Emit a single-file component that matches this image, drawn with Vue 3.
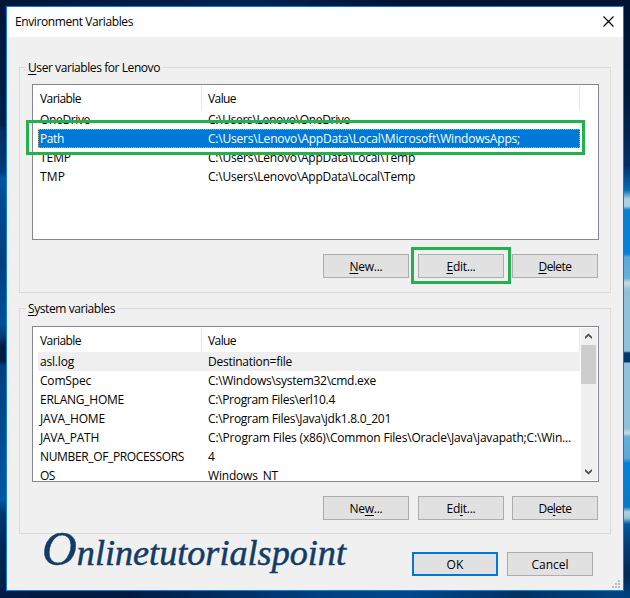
<script setup>
const groups = [
  {
    id: 'user',
    title: ['', 'U', 'ser variables for Lenovo'],
    titleWidth: 132,
    scroll: false,
    rows: [
      { name: 'OneDrive', nw: 50, value: 'C:\\Users\\Lenovo\\OneDrive', vw: 142 },
      { name: 'Path', nw: 24, value: 'C:\\Users\\Lenovo\\AppData\\Local\\Microsoft\\WindowsApps;', vw: 312, state: 'selected' },
      { name: 'TEMP', nw: 31, value: 'C:\\Users\\Lenovo\\AppData\\Local\\Temp', vw: 207 },
      { name: 'TMP', nw: 25, value: 'C:\\Users\\Lenovo\\AppData\\Local\\Temp', vw: 207 },
    ],
    buttons: [
      { text: ['', 'N', 'ew...'], w: 33 },
      { text: ['', 'E', 'dit...'], w: 29, marked: true },
      { text: ['', 'D', 'elete'], w: 33 },
    ],
  },
  {
    id: 'system',
    title: ['', 'S', 'ystem variables'],
    titleWidth: 87,
    scroll: true,
    rows: [
      { name: 'asl.log', nw: 34, value: 'Destination=file', vw: 84, state: 'inactive' },
      { name: 'ComSpec', nw: 51, value: 'C:\\Windows\\system32\\cmd.exe', vw: 168 },
      { name: 'ERLANG_HOME', nw: 84, value: 'C:\\Program Files\\erl10.4', vw: 127 },
      { name: 'JAVA_HOME', nw: 65, value: 'C:\\Program Files\\Java\\jdk1.8.0_201', vw: 183 },
      { name: 'JAVA_PATH', nw: 59, value: 'C:\\Program Files (x86)\\Common Files\\Oracle\\Java\\javapath;C:\\Win...', vw: 363 },
      { name: 'NUMBER_OF_PROCESSORS', nw: 144, value: '4', vw: 7 },
      { name: 'OS', nw: 15, value: 'Windows_NT', vw: 70 },
    ],
    buttons: [
      { text: ['Ne', 'w', '...'], w: 33 },
      { text: ['Ed', 'i', 't...'], w: 29 },
      { text: ['De', 'l', 'ete'], w: 33 },
    ],
  },
]

// Tracks a label so that it fills the given width in pixels.
const vFit = {
  mounted(el, { value }) {
    const natural = el.getBoundingClientRect().width
    el.style.letterSpacing = `${(value - natural) / el.textContent.length}px`
  },
}
</script>

<template>
  <div class="desktop">
    <div class="edge left"></div>
    <div class="edge right"></div>
    <div class="dialog">
      <header class="titlebar">
        <span v-fit="118" class="label">Environment Variables</span>
        <svg class="close" width="11" height="11" viewBox="0 0 11 11">
          <path d="M.5.5l10 10M10.5.5l-10 10" stroke="#000" stroke-width="1.15" fill="none" />
        </svg>
      </header>

      <main class="content">
        <section v-for="g in groups" :key="g.id" class="group" :class="g.id">
          <h2 class="legend"><span v-fit="g.titleWidth" class="label">{{ g.title[0] }}<u>{{ g.title[1] }}</u>{{ g.title[2] }}</span></h2>
          <div class="list">
            <div class="table">
              <div class="head">
                <div class="cell name"><span v-fit="41" class="label">Variable</span></div>
                <div class="cell value"><span v-fit="28" class="label">Value</span></div>
              </div>
              <div v-for="r in g.rows" :key="r.name" class="row" :class="r.state">
                <div class="cell name"><span v-fit="r.nw" class="label">{{ r.name }}</span></div>
                <div class="cell value"><span v-fit="r.vw" class="label">{{ r.value }}</span></div>
              </div>
            </div>
            <div v-if="g.scroll" class="scrollbar">
              <svg class="arrow" width="15" height="17" viewBox="0 0 15 17">
                <path d="M4 11V8.800L7.500 5.500 11 8.800V11L7.500 7.900z" fill="#505050" />
              </svg>
              <div class="thumb"></div>
              <svg class="arrow end" width="15" height="17" viewBox="0 0 15 17">
                <path d="M4 6v2.200l3.500 3.300L11 8.200V6L7.500 9.100z" fill="#505050" />
              </svg>
            </div>
            <div v-else class="marker"></div>
          </div>
          <div class="buttons">
            <button v-for="(b, i) in g.buttons" :key="i" class="btn" :class="{ marked: b.marked }">
              <span v-fit="b.w" class="label">{{ b.text[0] }}<u>{{ b.text[1] }}</u>{{ b.text[2] }}</span>
            </button>
          </div>
        </section>

        <footer class="footer">
          <svg class="brand" width="320" height="62" viewBox="0 0 320 62">
            <text x="7" y="37" textLength="304" lengthAdjust="spacingAndGlyphs"><tspan class="initial">O</tspan>nlinetutorialspoint</text>
          </svg>
          <div class="actions">
            <button class="btn primary"><span v-fit="17" class="label">OK</span></button>
            <button class="btn"><span v-fit="37" class="label">Cancel</span></button>
          </div>
          <svg class="grip" width="8" height="8" viewBox="0 0 8 8">
            <path d="M6 0h2v2H6zM3 3h2v2H3zM6 3h2v2H6zM0 6h2v2H0zM3 6h2v2H3zM6 6h2v2H6z" fill="#b9bec4" />
          </svg>
        </footer>
      </main>
    </div>
  </div>
</template>

<style>
body {
  margin: 0;
  overflow: hidden;
}
</style>

<style scoped>
.desktop {
  position: relative;
  box-sizing: border-box;
  width: 630px;
  height: 598px;
  padding: 6px;
  background: linear-gradient(90deg, #001c44 0, #001a40 20%, #003f80 50%, #00488c 65%, #003263 82%, #004484 100%);
  font: 12px/19px "Open Sans", "Noto Sans", sans-serif;
  color: #000;
}
.desktop::before {
  content: "";
  position: absolute;
  inset: 0 0 auto;
  height: 6px;
  background: linear-gradient(90deg, #001638, #002452 40%, #001233 65%, #001334);
}
.edge {
  position: absolute;
  top: 0;
  width: 6px;
  height: 598px;
}
.left {
  left: 0;
  background: linear-gradient(#001638 0, #001f4b 125px, #002d63 130px, #003b79 172px, #0057a3 178px, #004a90 200px, #003f7f 260px, #004f96 325px, #00366f 338px, #001a40 346px, #001a40 360px, #00407f 366px, #004b8e 430px, #0057a3 500px, #003a73 512px, #00295a 540px, #001c44 598px);
}
.right {
  right: 0;
  background: linear-gradient(#001233 0, #001a41 100px, #003069 165px, #006cb8 190px, #a9d3e3 199px, #a9d3e3 206px, #0a80d2 210px, #0083dc 254px, #58aad8 257px, #63b1dc 278px, #c9dce4 283px, #8cc2dc 290px, #8cc2dc 351px, #00396f 353px, #00396f 362px, #8cc2dc 363px, #8cc2dc 428px, #c4dbe5 433px, #5fb0dc 437px, #58aad8 458px, #0083dc 463px, #0a78c8 507px, #aed3e3 512px, #8fc4dc 518px, #0058a2 524px, #003d79 545px, #002a58 575px, #004484 598px);
}
.dialog {
  position: relative;
  box-sizing: border-box;
  display: flex;
  flex-direction: column;
  width: 618px;
  height: 585px;
  border: 1px solid #0f7fd8;
  background: #f0f0f0;
}
.label {
  display: inline-block;
  white-space: pre;
}
u {
  text-decoration: underline;
  text-decoration-thickness: 1px;
  text-underline-offset: 2px;
  text-decoration-skip-ink: none;
}
.titlebar {
  display: flex;
  align-items: center;
  justify-content: space-between;
  box-sizing: border-box;
  height: 30px;
  padding: 0 9px 1px 8px;
  background: #fff;
}
.close {
  margin-top: -1px;
}
.content {
  padding: 30px 12px 0;
}
.group {
  box-sizing: border-box;
  width: 592px;
  height: 226px;
  padding: 0 12px;
  border: 1px solid #dcdcdc;
}
.group + .group {
  margin-top: 15px;
}
.legend {
  width: fit-content;
  height: 16px;
  margin: -10px 0 0 -6px;
  padding: 0 2px;
  font: inherit;
  background: #f0f0f0;
}
.list {
  position: relative;
  box-sizing: border-box;
  display: flex;
  justify-content: space-between;
  width: 567px;
  height: 156px;
  margin-top: 10px;
  padding: 1px;
  border: 1px solid #828790;
  background: #fff;
}
.system .list {
  margin-top: 11px;
}
.table {
  width: 546px;
  height: 153px;
  overflow: hidden;
}
.head {
  display: flex;
  box-sizing: border-box;
  height: 24px;
  border-right: 1px solid #e5e5e5;
}
.head .cell {
  line-height: 25px;
}
.head .name {
  border-right: 1px solid #e5e5e5;
}
.cell {
  box-sizing: border-box;
  white-space: nowrap;
}
.row {
  display: flex;
  box-sizing: border-box;
  height: 19px;
  margin-left: 4px;
}
.row .name {
  width: 164px;
  padding-left: 2px;
}
.head .name {
  width: 168px;
  padding-left: 6px;
}
.value {
  padding-left: 6px;
}
.selected {
  background: #0078d7;
  color: #fff;
  outline: 1px dotted #ff9a42;
  outline-offset: -1px;
}
.inactive {
  background: #efefef;
}
.scrollbar {
  display: flex;
  flex-direction: column;
  width: 16px;
  height: 152px;
  background: #f0f0f0;
}
.thumb {
  width: 15px;
  height: 39px;
  background: #cdcdcd;
}
.arrow {
  display: block;
}
.end {
  margin-top: auto;
}
.marker {
  position: absolute;
  left: -7px;
  top: 35px;
  box-sizing: border-box;
  width: 559px;
  height: 35px;
  border: 3px solid #22b14c;
}
.buttons {
  display: flex;
  justify-content: flex-end;
  gap: 8px;
  margin-top: 14px;
}
.buttons .btn:first-child {
  margin-right: 1px;
}
.btn {
  position: relative;
  box-sizing: border-box;
  width: 86px;
  height: 24px;
  padding: 0;
  border: 1px solid #adadad;
  background: #e1e1e1;
  font: inherit;
  line-height: 21px;
  color: inherit;
}
.marked::after {
  content: "";
  position: absolute;
  inset: -8px -8px -7px;
  border: 3px solid #22b14c;
}
.primary {
  border: 2px solid #0078d7;
}
.footer {
  position: relative;
  display: flex;
  height: 56px;
}
.brand {
  margin: -6px 0 0 16px;
  overflow: visible;
  font-family: "Liberation Serif", serif;
  font-style: italic;
  font-size: 36px;
  fill: #123c66;
  stroke: #123c66;
  stroke-width: 0.5px;
}
.initial {
  font-size: 48px;
}
.actions {
  display: flex;
  gap: 9px;
  margin: 18px 0 0 57px;
}
.grip {
  position: absolute;
  right: -9px;
  bottom: 2px;
}
</style>
